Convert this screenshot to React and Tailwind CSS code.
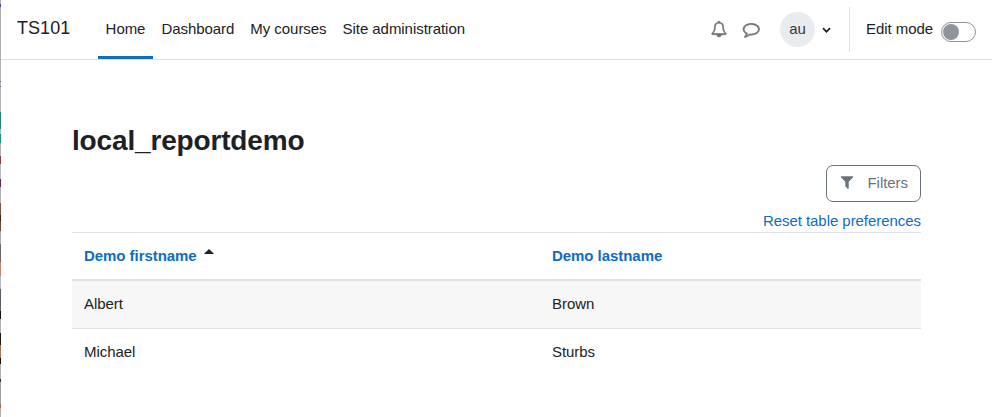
import React from "react";

const EDGE = [
  [4, "bg-[#b0aeb0]"], [3, "bg-[#3d4f94]"], [53, "bg-[#aeaeae]"], [21, "bg-[#b3b3b3]"],
  [1, "bg-[#6f7788]"], [4, "bg-[#a9b3c4]"], [1, "bg-[#6f7788]"], [25, "bg-[#b3b3b3]"],
  [17, "bg-[#23857a]"], [5, "bg-[#b7b9b3]"], [9, "bg-[#1f8f80]"], [13, "bg-[#b0b0b0]"],
  [8, "bg-[#8a3a3f]"], [15, "bg-[#b9bcc4]"], [8, "bg-[#5f2a52]"], [16, "bg-[#b0b0b0]"],
  [12, "bg-[#7a5540]"], [6, "bg-[#33211c]"], [10, "bg-[#6d4a3a]"], [13, "bg-[#a8abb0]"],
  [18, "bg-[#6b6668]"], [14, "bg-[#c08a70]"], [13, "bg-[#b5b9c4]"], [22, "bg-[#5f5c68]"],
  [8, "bg-[#111111]"], [14, "bg-[#b0b0b0]"], [12, "bg-[#1f1712]"], [13, "bg-[#a8754c]"],
  [6, "bg-[#17110d]"], [15, "bg-[#b0b0b4]"], [3, "bg-[#333333]"], [22, "bg-[#a0a0a0]"],
  [4, "bg-[#a36a4c]"], [9, "bg-[#b0b0b0]"],
];

function Glyph({ d, className, weight = 0 }) {
  return (
    <svg
      viewBox="0 0 1792 1792"
      fill="currentColor"
      stroke="currentColor"
      strokeWidth={weight}
      className={"shrink-0 overflow-visible " + className}
      aria-hidden="true"
    >
      <path d={d} />
    </svg>
  );
}

const BELL =
  "M912 1696q0-16-16-16-59 0-101.5-42.5t-42.5-101.5q0-16-16-16t-16 16q0 73 51.5 124.5t124.5 51.5q16 0 16-16zm-666-288h1300q-266-300-266-832 0-51-24-105t-69-103-121.5-80.5-169.5-31.5-169.5 31.5-121.5 80.5-69 103-24 105q0 532-266 832zm1482 0q0 52-38 90t-90 38h-448q0 106-75 181t-181 75-181-75-75-181h-448q-52 0-90-38t-38-90q50-42 91-88t85-119.5 74.5-158.5 50-206 19.5-260q0-152 117-282.5t307-158.5q-8-19-8-39 0-40 28-68t68-28 68 28 28 68q0 20-8 39 190 28 307 158.5t117 282.5q0 139 19.5 260t50 206 74.5 158.5 85 119.5 91 88z";
const COMMENT =
  "M896 384q-204 0-381.5 69.5t-282 187.5-104.5 255q0 112 71.5 213.5t201.5 175.5l87 50-27 96q-24 91-70 172 152-63 275-171l43-38 57 6q69 8 130 8 204 0 381.5-69.5t282-187.5 104.5-255-104.5-255-282-187.5-381.5-69.5zm896 512q0 174-120 321.5t-326 233-450 85.5q-70 0-145-8-198 175-460 242-49 14-114 22h-5q-15 0-27-10.5t-16-27.5v-1q-3-4-.5-12t2-10 4.5-9.5l6-9 7-8.5 8-9q7-8 31-34.5t34.5-38 31-39.5 32.5-51 27-59 26-76q-157-89-247.5-220t-90.5-281q0-130 71-248.5t191-204.5 286-136.5 348-50.5 348 50.5 286 136.5 191 204.5 71 248.5z";
const FILTER =
  "M1595 295q17 41-14 70l-493 493v742q0 42-39 59-13 5-25 5-27 0-45-19l-256-256q-19-19-19-45v-486l-493-493q-31-29-14-70 17-39 59-39h1280q42 0 59 39z";
const CHEVRON =
  "M1683 808l-742 741q-19 19-45 19t-45-19l-742-741q-19-19-19-45.5t19-45.5l166-165q19-19 45-19t45 19l531 531 531-531q19-19 45-19t45 19l166 165q19 19 19 45.5t-19 45.5z";

function NavLink({ children, active }) {
  return (
    <a
      href="#"
      className={
        "flex h-[59px] items-center border-b-[3px] px-2 " +
        (active ? "border-[#0f6cbf]" : "border-transparent")
      }
    >
      <span className="pt-[2px]">{children}</span>
    </a>
  );
}

export default function App() {
  return (
    <div className="flex h-[417px] w-[992px] overflow-hidden bg-white font-['Liberation_Sans',Arial,sans-serif] text-[15px] leading-[22.5px] tracking-[-0.05px] text-[#1d2125]">
      <div className="flex w-px shrink-0 flex-col">
        {EDGE.map(([h, color], i) => (
          <div key={i} className={color} style={{ height: h }} />
        ))}
      </div>

      <div className="flex-1">
        <nav className="flex h-[60px] border-b border-[#dee2e6]">
          <a href="#" className="ml-4 flex w-[73px] items-center pb-[3px] text-[18px] tracking-[0.05px]">TS101</a>
          <div className="ml-[7.6px] flex">
            <NavLink active>Home</NavLink>
            <NavLink>Dashboard</NavLink>
            <NavLink>My courses</NavLink>
            <NavLink>Site administration</NavLink>
          </div>

          <div className="ml-auto flex h-[59px] pr-4">
            <Glyph d={BELL} weight={70} className="mt-[20.5px] size-4 text-[#6a737b]" />
            <Glyph d={COMMENT} weight={70} className="mt-[20.75px] ml-[15.5px] size-[16.5px] text-[#6a737b]" />
            <div className="mt-3 ml-[20.75px] flex size-[35px] items-center justify-center rounded-full bg-[#e9ecef] text-[#343a40]">
              au
            </div>
            <Glyph d={CHEVRON} className="mt-[25px] ml-[7px] size-[9px]" />
            <div className="mt-[7px] ml-[18px] h-[45px] w-px bg-[#dee2e6]" />
            <span className="mt-[18px] ml-4 w-[67px] whitespace-nowrap">Edit mode</span>
            <div className="mt-[22px] ml-2 flex h-5 w-[35px] items-center rounded-full border border-[#8f959e] pl-px">
              <div className="size-4 rounded-full bg-[#8f959e]" />
            </div>
          </div>
        </nav>

        <main className="ml-[71px] w-[849px]">
          <h2 className="pt-[64px] text-[28px] leading-[34px] font-bold tracking-[-0.16px]">local_reportdemo</h2>
          <div className="mt-[7px] flex justify-end">
            <button className="flex h-[37px] w-[95px] items-center rounded-[7px] border border-[#6a737b] pl-3 text-[#6a737b]">
              <Glyph d={FILTER} className="mb-[3px] size-4" />
              <span className="ml-[12.5px] pb-px">Filters</span>
            </button>
          </div>
          <div className="mt-2 flex h-[22px] justify-end text-[#0f6cbf]">
            <a href="#">Reset table preferences</a>
          </div>
          <table className="w-full table-fixed border-separate border-spacing-0 text-left">
            <colgroup>
              <col className="w-[468px]" />
              <col />
            </colgroup>
            <thead>
              <tr className="h-[49px] text-[#0f6cbf]">
                <th className="border-t border-b-2 border-[#dee2e6] px-3 py-0 font-bold">
                  <span className="flex items-center">
                    Demo firstname
                    <svg viewBox="0 0 10 5" className="mb-[9px] ml-[7.5px] h-[5px] w-[10px] fill-[#1d2125]">
                      <path d="M5 0L9.7 4.4Q10 5 9.3 5H.7Q0 5 .3 4.4Z" />
                    </svg>
                  </span>
                </th>
                <th className="border-t border-b-2 border-[#dee2e6] px-3 py-0 font-bold">Demo lastname</th>
              </tr>
            </thead>
            <tbody>
              <tr className="h-[48px] bg-[#f7f7f7]">
                <td className="border-b border-[#dee2e6] px-3">Albert</td>
                <td className="border-b border-[#dee2e6] px-3">Brown</td>
              </tr>
              <tr className="h-[47px]">
                <td className="px-3">Michael</td>
                <td className="px-3">Sturbs</td>
              </tr>
            </tbody>
          </table>
        </main>
      </div>
    </div>
  );
}
